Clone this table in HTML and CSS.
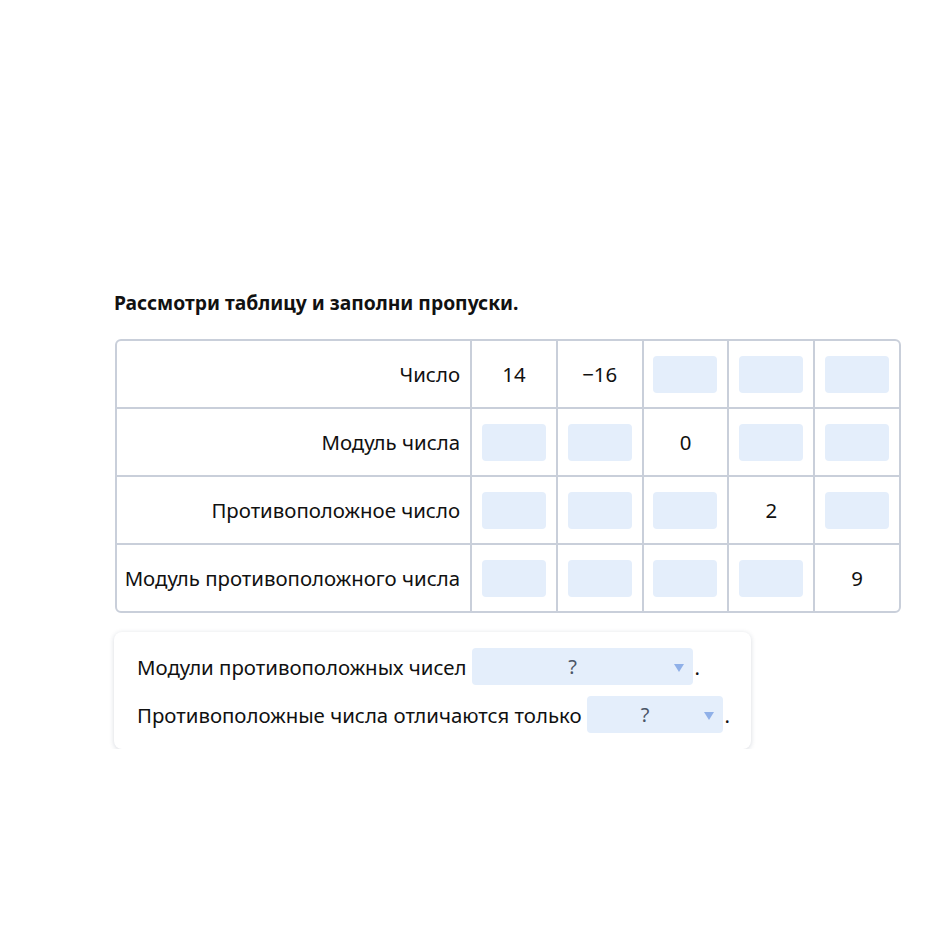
FILE: index.html
```html
<!DOCTYPE html>
<html lang="ru">
<head>
<meta charset="utf-8">
<link rel="stylesheet" href="styles.css">
</head>
<body>
<div class="page">
  <h1 class="title">Рассмотри таблицу и заполни пропуски.</h1>
  <div class="grid">
    <div class="cell head">Число</div>
    <div class="cell">14</div>
    <div class="cell">−16</div>
    <div class="cell"><span class="inp"></span></div>
    <div class="cell"><span class="inp"></span></div>
    <div class="cell"><span class="inp"></span></div>

    <div class="cell head">Модуль числа</div>
    <div class="cell"><span class="inp"></span></div>
    <div class="cell"><span class="inp"></span></div>
    <div class="cell">0</div>
    <div class="cell"><span class="inp"></span></div>
    <div class="cell"><span class="inp"></span></div>

    <div class="cell head">Противоположное число</div>
    <div class="cell"><span class="inp"></span></div>
    <div class="cell"><span class="inp"></span></div>
    <div class="cell"><span class="inp"></span></div>
    <div class="cell">2</div>
    <div class="cell"><span class="inp"></span></div>

    <div class="cell head">Модуль противоположного числа</div>
    <div class="cell"><span class="inp"></span></div>
    <div class="cell"><span class="inp"></span></div>
    <div class="cell"><span class="inp"></span></div>
    <div class="cell"><span class="inp"></span></div>
    <div class="cell">9</div>
  </div>

  <div class="card">
    <div class="line">Модули противоположных чисел <span class="sel sel-wide"><span class="q">?</span><span class="arrow"></span></span>.</div>
    <div class="line">Противоположные числа отличаются только <span class="sel sel-narrow"><span class="q">?</span><span class="arrow"></span></span>.</div>
  </div>
</div>
</body>
</html>
```

FILE: styles.css
```css
* { box-sizing: border-box; }
html, body { margin: 0; padding: 0; background: #fff; }
body {
  font-family: "Noto Sans", "Open Sans", sans-serif;
  color: #111;
}
.page {
  padding: 290px 0 0 114px;
}
.title {
  margin: 0 0 23px 0;
  font-size: 19.3px;
  font-weight: 700;
  line-height: 26px;
}
.grid {
  display: grid;
  grid-template-columns: 353px repeat(5, 1fr);
  grid-auto-rows: 66px;
  gap: 2px;
  width: 786px;
  margin-left: 1px;
  background: #c9cfda;
  border: 2px solid #c9cfda;
  border-radius: 6px;
  overflow: hidden;
}
.cell {
  background: #fff;
  display: flex;
  align-items: center;
  justify-content: center;
  font-size: 20.4px;
}
.cell.head {
  justify-content: flex-end;
  padding-right: 10px;
}
.inp {
  display: block;
  width: 64px;
  height: 37px;
  border-radius: 4px;
  background: #e4eefb;
}
.card {
  margin-top: 19px;
  width: 637px;
  padding: 16px 0 16px 23px;
  border-radius: 8px;
  background: #fff;
  box-shadow: 0 1px 5px rgba(30, 45, 80, 0.18);
}
.line {
  display: flex;
  align-items: center;
  height: 37px;
  font-size: 20.4px;
  white-space: nowrap;
}
.line + .line { margin-top: 11px; }
.sel {
  position: relative;
  display: inline-flex;
  align-items: center;
  justify-content: center;
  height: 37px;
  padding-right: 19px;
  margin-left: 5px;
  margin-right: 2px;
  border-radius: 4px;
  background: #e4eefb;
  color: #4b5566;
}
.sel-wide { width: 221px; }
.sel-narrow { width: 136px; }
.q { font-size: 20px; }
.arrow {
  position: absolute;
  right: 9px;
  top: 16px;
  width: 0;
  height: 0;
  border-left: 5px solid transparent;
  border-right: 5px solid transparent;
  border-top: 8px solid #8fb0e8;
}
```
